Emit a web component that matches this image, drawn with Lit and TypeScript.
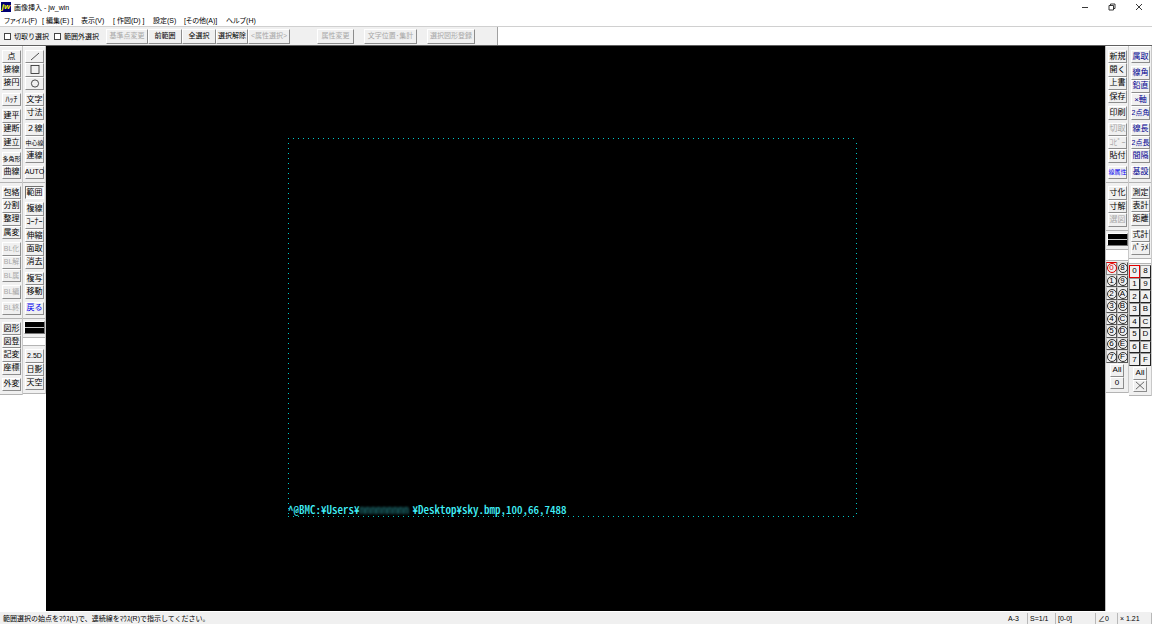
import { LitElement, html, css, svg, nothing } from "lit";
import { customElement, property } from "lit/decorators.js";
import { classMap } from "lit/directives/class-map.js";

interface Tool {
  label: string;
  gap?: boolean;
  off?: boolean;
  tone?: string;
  icon?: string;
  pressed?: boolean;
}

/** "|" starts a new group, "-" marks a disabled tool, "*" a pressed one. */
const tools = (source: string, tone = ""): Tool[] =>
  source.split(" ").map((raw) => {
    const label = raw.replace(/^[|*-]+/, "");
    const flags = raw.slice(0, raw.length - label.length);
    return {
      label,
      tone: label === "戻る" || label === "線属性" ? "blue" : tone,
      gap: flags.includes("|"),
      off: flags.includes("-"),
      pressed: flags.includes("*"),
      icon: ["線", "矩形", "円弧"].includes(label) ? label : undefined,
    };
  });

const icons: Record<string, unknown> = {
  線: svg`<path d="M2 9L10 2"/>`,
  矩形: svg`<rect x="2" y="1.5" width="8" height="8"/>`,
  円弧: svg`<circle cx="6" cy="5.5" r="3.6"/>`,
  "×": svg`<path d="M1 1L11 10M11 1L1 10"/>`,
};

const base = css`
  :host {
    font-family: "Liberation Sans", "Noto Sans CJK JP", sans-serif;
    font-size: 8px;
    color: #000;
  }
  * {
    box-sizing: border-box;
  }
  button {
    font: inherit;
    color: inherit;
    margin: 0;
    padding: 0;
    background: #f0f0f0;
    border: 1px solid;
    border-color: #fff #8c8c8c #8c8c8c #fff;
    border-radius: 0;
    white-space: nowrap;
    display: flex;
    align-items: center;
    justify-content: center;
    line-height: 10px;
    min-width: 0;
    min-height: 0;
  }
  button:disabled {
    color: #a8a8a8;
  }
`;

@customElement("tool-panel")
export class ToolPanel extends LitElement {
  @property({ attribute: false }) items: Tool[] = [];

  static styles = [
    base,
    css`
      :host {
        display: flex;
        flex-direction: column;
        padding: 3px 1px 3px 2px;
        background: #f0f0f0;
        border-bottom: 1px solid #b4b4b4;
        box-sizing: border-box;
      }
      button {
        flex: 1 1 0;
      }
      .gap {
        margin-top: 3px;
      }
      .blue {
        color: #0000f0;
      }
      .navy {
        color: #000090;
      }
      .mixed {
        font-size: 7px;
      }
      .long {
        font-size: 6px;
      }
      .pressed {
        border-color: #707070 #fff #fff #707070;
        background: #f8f8f8;
      }
      svg {
        width: 12px;
        height: 11px;
        fill: none;
        stroke: #222;
        stroke-width: 0.8;
      }
    `,
  ];

  render() {
    return this.items.map(
      (t) => html`<button
        class=${classMap({
          gap: !!t.gap,
          blue: t.tone === "blue",
          navy: t.tone === "navy",
          pressed: !!t.pressed,
          mixed: /^(AUTO|BL.|2点.|2\.5D)$/.test(t.label),
          long: /^[^ -~｡-ﾟ]{3}$/.test(t.label),
        })}
        ?disabled=${t.off}
        aria-label=${t.label}
      >
        ${t.icon
          ? html`<svg viewBox="0 0 12 11">${icons[t.icon]}</svg>`
          : t.label}
      </button>`,
    );
  }
}

@customElement("layer-panel")
export class LayerPanel extends LitElement {
  @property({ type: Boolean }) round = false;

  static styles = [
    base,
    css`
      :host {
        display: flex;
        flex-direction: column;
        height: 133px;
        padding: 1px 0 3px;
        background: #f0f0f0;
        border: 1px solid #b4b4b4;
        border-width: 1px 0;
        box-sizing: border-box;
      }
      .grid {
        display: grid;
        grid-template-columns: 1fr 1fr;
        grid-auto-flow: column;
        grid-template-rows: repeat(8, 1fr);
        height: 101px;
        margin-bottom: 1px;
      }
      .grid button {
        border-color: #ddd #555 #555 #bbb;
      }
      .square button {
        border-color: #999 #222 #222 #999;
      }
      .grid .current {
        border: 1px solid #e00000;
      }
      .round .current {
        border-color: #e00000 #888 #888 #888;
      }
      .current span {
        color: #e00000;
        border-color: #e00000;
      }
      .square .current span {
        color: #000;
      }
      .ring {
        width: 10px;
        height: 10px;
        flex: none;
        line-height: 8px;
        border: 1px solid #333;
        border-radius: 50%;
        text-align: center;
      }
      .wide {
        flex: 1;
        margin: 0 4px;
      }
      svg {
        width: 10px;
        height: 9px;
        fill: none;
        stroke: #222;
        stroke-width: 0.8;
      }
    `,
  ];

  render() {
    return html`
      <div
        class=${classMap({
          grid: true,
          round: this.round,
          square: !this.round,
        })}
      >
        ${[..."0123456789ABCDEF"].map(
          (d, i) =>
            html`<button class=${i ? "" : "current"}>
              <span class=${this.round ? "ring" : ""}>${d}</span>
            </button>`,
        )}
      </div>
      <button class="wide">All</button>
      <button class="wide" aria-label=${this.round ? "0" : "×"}>
        ${this.round
          ? "0"
          : html`<svg viewBox="0 0 12 11">${icons["×"]}</svg>`}
      </button>
    `;
  }
}

@customElement("app-root")
export class AppRoot extends LitElement {
  static styles = [
    base,
    css`
      :host {
        display: flex;
        flex-direction: column;
        height: 100vh;
        background: #fff;
        overflow: hidden;
      }
      .title {
        height: 13px;
        display: flex;
        align-items: center;
        font-size: 7px;
      }
      .logo {
        width: 10px;
        height: 10px;
        margin: 0 3px 0 1px;
        background: #000070;
        color: #ff0;
        font: italic bold 8px/9px "Liberation Sans", sans-serif;
        text-align: center;
      }
      .name {
        flex: 1;
      }
      .title button {
        width: 27px;
        height: 13px;
        border: 0;
        background: none;
      }
      .title svg {
        width: 8px;
        height: 8px;
        fill: none;
        stroke: #222;
        stroke-width: 0.9;
      }
      nav {
        height: 13px;
        padding-left: 4px;
        display: grid;
        grid-template-columns: 38px 39px 32px 40px 31px 42px 40px;
        align-items: center;
        font-size: 7px;
        font-feature-settings: "palt";
      }
      nav a {
        color: #000;
        text-decoration: none;
        white-space: nowrap;
      }
      .options {
        height: 19px;
        border-top: 1px solid #d0d0d0;
        display: flex;
      }
      .bar {
        width: 498px;
        background: #f0f0f0;
        border-right: 1px solid #a0a0a0;
        display: flex;
        align-items: center;
        padding-left: 4px;
        font-size: 7px;
      }
      .bar label {
        display: flex;
        flex: none;
        align-items: center;
        width: 50px;
        gap: 3px;
        white-space: nowrap;
      }
      .bar input {
        appearance: none;
        margin: 0;
        width: 7px;
        height: 7px;
        flex: none;
        background: #fff;
        border: 1px solid #444;
      }
      .bar button {
        height: 15px;
        flex: none;
      }
      .b34 {
        width: 34px;
      }
      .b32 {
        width: 32px;
      }
      .b38 {
        width: 37px;
      }
      .b42 {
        width: 42px;
      }
      .b48 {
        width: 48px;
      }
      .b54 {
        width: 53px;
      }
      .first {
        margin-left: 2px;
      }
      .far {
        margin-left: 27px;
      }
      .near {
        margin-left: 10px;
      }
      .main {
        flex: 1;
        min-height: 0;
        display: flex;
        border-top: 1px solid #606060;
      }
      .side {
        display: grid;
        grid-template-columns: 23px 23px;
        align-items: start;
      }
      .right {
        border-left: 1px solid #c0c0c0;
      }
      .col {
        display: flex;
        flex-direction: column;
        border-right: 1px solid #c8c8c8;
        padding-top: 1px;
      }
      .p9 {
        height: 136px;
      }
      .p5 {
        height: 76px;
      }
      .p3 {
        height: 48px;
      }
      .style {
        height: 19px;
        padding: 2px 0 3px 1px;
        background: #f0f0f0;
        border-bottom: 1px solid #b4b4b4;
        display: flex;
      }
      .style button {
        flex: 1;
        background: #000;
        border-color: #fff #777 #777 #fff;
      }
      .style i {
        flex: 1;
        height: 1px;
        background: #ccc;
      }
      .space {
        height: 8px;
        border-bottom: 1px solid #b4b4b4;
      }
      .tall {
        height: 10px;
        border-bottom: 0;
      }
      .short {
        height: 4px;
        border-bottom: 0;
      }
      .canvas {
        flex: 1;
        background: #000;
        position: relative;
      }
      .frame {
        position: absolute;
        left: 242px;
        top: 92px;
        width: 569px;
        height: 379px;
        background:
          repeating-linear-gradient(90deg, #00c8c8 0 1px, #000 1px 5px) top / 100% 1px no-repeat,
          repeating-linear-gradient(90deg, #00c8c8 0 1px, #000 1px 5px) bottom / 100% 1px no-repeat,
          repeating-linear-gradient(#00c8c8 0 1px, #000 1px 5px) left / 1px 100% no-repeat,
          repeating-linear-gradient(#00c8c8 0 1px, #000 1px 5px) right / 1px 100% no-repeat;
        display: flex;
        align-items: flex-end;
        color: #40f0f8;
        font: 500 11px/15px "Noto Sans CJK JP", monospace;
        font-feature-settings: "hwid";
        white-space: pre;
      }
      .masked {
        width: 53px;
        filter: blur(1px);
        opacity: 0.5;
      }
      .status {
        height: 13px;
        background: #f0f0f0;
        border-top: 1px solid #fff;
        display: flex;
        align-items: center;
        white-space: nowrap;
      }
      .message {
        flex: 1;
        padding-left: 3px;
        font-size: 7px;
      }
      .cell {
        height: 11px;
        line-height: 11px;
        padding-left: 2px;
        border-right: 1px solid #b8b8b8;
        font-size: 7px;
      }
      .w22 {
        width: 22px;
      }
      .w28 {
        width: 28px;
      }
      .w40 {
        width: 40px;
      }
      .w34 {
        width: 34px;
      }
    `,
  ];

  private left1 = [
    tools("点 接線 接円 |ﾊｯﾁ |建平 建断 建立 |多角形 曲線"),
    tools("包絡 分割 整理 属変 |-BL化 -BL解 -BL属 |-BL編 |-BL終"),
    tools("図形 図登 記変 座標 |外変"),
  ];
  private left2 = [
    tools("線 矩形 円弧 |文字 寸法 |２線 中心線 連線 |AUTO"),
    tools("*範囲 |複線 ｺｰﾅｰ 伸縮 面取 消去 |複写 移動 |戻る"),
    tools("2.5D 日影 天空"),
  ];
  private right1 = [
    tools("新規 開く 上書 保存 |印刷 |-切取 -ｺﾋﾟｰ 貼付 |線属性"),
    tools("寸化 寸解 -選図"),
  ];
  private right2 = [
    tools("属取 |線角 鉛直 ×軸 2点角 |線長 2点長 間隔 |基設", "navy"),
    tools("測定 表計 距離 |式計 ﾊﾟﾗﾒ"),
  ];

  private lineStyle() {
    return html`<div class="style">
      <button aria-label="線属性"><i></i></button>
    </div>`;
  }

  private option(label: string, size: string, off = false) {
    return html`<button class=${size} ?disabled=${off || nothing}>
      ${label}
    </button>`;
  }

  render() {
    return html`
      <header class="title">
        <span class="logo">jw</span>
        <span class="name">画像挿入 - jw_win</span>
        <button aria-label="最小化">
          <svg viewBox="0 0 8 8"><path d="M1 4.5H7" /></svg>
        </button>
        <button aria-label="元に戻す">
          <svg viewBox="0 0 8 8">
            <path d="M1 2.5H5.5V7H1ZM2.5 2.5V1H7V5.5H5.5" />
          </svg>
        </button>
        <button aria-label="閉じる">
          <svg viewBox="0 0 8 8"><path d="M1 1L7 7M7 1L1 7" /></svg>
        </button>
      </header>
      <nav>
        ${[
          "ファイル(F)",
          "[ 編集(E) ]",
          "表示(V)",
          "[ 作図(D) ]",
          "設定(S)",
          "[その他(A)]",
          "ヘルプ(H)",
        ].map((m) => html`<a href="#">${m}</a>`)}
      </nav>
      <div class="options">
        <div class="bar">
          <label><input type="checkbox" />切取り選択</label>
          <label><input type="checkbox" />範囲外選択</label>
          ${this.option("基準点変更", "b42 first", true)}
          ${this.option("前範囲", "b34")} ${this.option("全選択", "b34")}
          ${this.option("選択解除", "b32")}
          ${this.option("<属性選択>", "b42", true)}
          ${this.option("属性変更", "b38 far", true)}
          ${this.option("文字位置･集計", "b54 near", true)}
          ${this.option("選択図形登録", "b48 near", true)}
        </div>
      </div>
      <div class="main">
        <aside class="side">
          <div class="col">
            <tool-panel class="p9" .items=${this.left1[0]}></tool-panel>
            <tool-panel class="p9" .items=${this.left1[1]}></tool-panel>
            <tool-panel class="p5" .items=${this.left1[2]}></tool-panel>
          </div>
          <div class="col">
            <tool-panel class="p9" .items=${this.left2[0]}></tool-panel>
            <tool-panel class="p9" .items=${this.left2[1]}></tool-panel>
            ${this.lineStyle()}
            <div class="space"></div>
            <tool-panel class="p3" .items=${this.left2[2]}></tool-panel>
          </div>
        </aside>
        <main class="canvas">
          <div class="frame"><span>^@BMC:¥Users¥</span><span class="masked" aria-hidden="true">nnnnnnnnn</span><span>¥Desktop¥sky.bmp,100,66,7488</span></div>
        </main>
        <aside class="side right">
          <div class="col">
            <tool-panel class="p9" .items=${this.right1[0]}></tool-panel>
            <tool-panel class="p3" .items=${this.right1[1]}></tool-panel>
            ${this.lineStyle()}
            <div class="space tall"></div>
            <layer-panel round></layer-panel>
          </div>
          <div class="col">
            <tool-panel class="p9" .items=${this.right2[0]}></tool-panel>
            <tool-panel class="p5" .items=${this.right2[1]}></tool-panel>
            <div class="space short"></div>
            <layer-panel></layer-panel>
          </div>
        </aside>
      </div>
      <footer class="status">
        <span class="message"
          >範囲選択の始点をﾏｳｽ(L)で、連続線をﾏｳｽ(R)で指示してください。</span
        >
        <span class="cell w22">A-3</span>
        <span class="cell w28">S=1/1</span>
        <span class="cell w40">[0-0]</span>
        <span class="cell w22">∠0</span>
        <span class="cell w34">× 1.21</span>
      </footer>
    `;
  }
}
